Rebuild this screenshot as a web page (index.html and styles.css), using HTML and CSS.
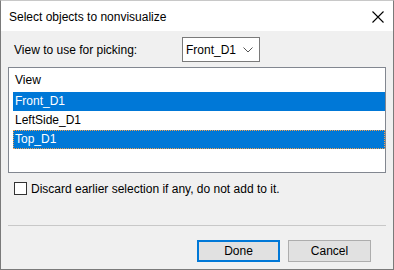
FILE: index.html
```html
<!DOCTYPE html>
<html lang="en">
<head>
  <meta charset="UTF-8">
  <title>Select objects to nonvisualize</title>
  <link rel="stylesheet" href="styles.css">
</head>
<body>
  <div class="window">
    <div class="titlebar">
      <span class="title">Select objects to nonvisualize</span>
      <svg class="close" width="12" height="12" viewBox="0 0 12 12">
        <path d="M0.5 0.5 L11.5 11.5 M11.5 0.5 L0.5 11.5" stroke="#000" stroke-width="1.1" fill="none"/>
      </svg>
    </div>

    <div class="content">
      <div class="pick-row">
        <span class="label">View to use for picking:</span>
        <div class="combo">
          <span>Front_D1</span>
          <svg width="10" height="6" viewBox="0 0 10 6">
            <path d="M0.5 0.5 L5 5 L9.5 0.5" stroke="#555" stroke-width="1" fill="none"/>
          </svg>
        </div>
      </div>

      <div class="listbox">
        <div class="list-head">View</div>
        <div class="list-row selected">Front_D1</div>
        <div class="list-row">LeftSide_D1</div>
        <div class="list-row selected focused">Top_D1</div>
      </div>

      <label class="check-row">
        <span class="checkbox"></span>
        <span>Discard earlier selection if any, do not add to it.</span>
      </label>

      <div class="separator"></div>

      <div class="buttons">
        <button class="btn default">Done</button>
        <button class="btn">Cancel</button>
      </div>
    </div>
  </div>
</body>
</html>
```

FILE: styles.css
```css
html, body {
  margin: 0; padding: 0;
  font-family: 'Segoe UI', 'Liberation Sans', Arial, sans-serif;
  font-size: 12px; color: #000;
}
.window {
  width: 394px; height: 270px; box-sizing: border-box;
  border: 1px solid #7a7a7a; border-top-color: #c8c8c8;
  background: #f0f0f0;
  display: flex; flex-direction: column;
}
.titlebar {
  height: 30px; background: #fff;
  display: flex; align-items: center; justify-content: space-between;
  padding: 0 9px 0 8px;
}
.title { margin-top: 1px; }
.close { margin-top: 2px; }
.content {
  flex: 1;
  padding: 0 7px;
  display: flex; flex-direction: column;
}
.pick-row {
  display: flex; align-items: center;
  margin-top: 6px; height: 25px;
}
.label { padding-left: 6px; width: 168px; }
.combo {
  width: 78px; height: 25px; box-sizing: border-box;
  border: 1px solid #7a7a7a; background: #fff;
  display: flex; align-items: center; justify-content: space-between;
  padding: 0 6px 0 3px;
}
.listbox {
  margin-top: 5px;
  height: 106px; box-sizing: border-box;
  border: 1px solid #828790; background: #fff;
  display: flex; flex-direction: column;
}
.list-head {
  height: 24px; line-height: 24px;
  padding-left: 6px;
}
.list-row {
  height: 19px; line-height: 19px;
  margin-left: 4px;
  padding-left: 2px;
  box-sizing: border-box;
}
.list-row.selected { background: #0078d7; color: #fff; }
.list-row.focused {
  border: 1px dotted #f0a050;
  line-height: 17px; padding-left: 1px;
}
.check-row {
  display: flex; align-items: center; gap: 4px;
  margin-top: 9px; padding-left: 6px; height: 13px;
}
.checkbox {
  width: 13px; height: 13px; box-sizing: border-box;
  border: 1px solid #333; background: #fff;
}
.separator {
  margin-top: 30px;
  height: 1px; background: #c8c8c8;
}
.buttons {
  display: flex; justify-content: flex-end; gap: 8px;
  margin-top: 14px; padding-right: 15px;
}
.btn {
  width: 83px; height: 22px; box-sizing: border-box;
  font: inherit; color: #000;
  background: #e1e1e1; border: 1px solid #adadad;
  padding: 0;
}
.btn.default { border: 2px solid #0078d7; }
```
